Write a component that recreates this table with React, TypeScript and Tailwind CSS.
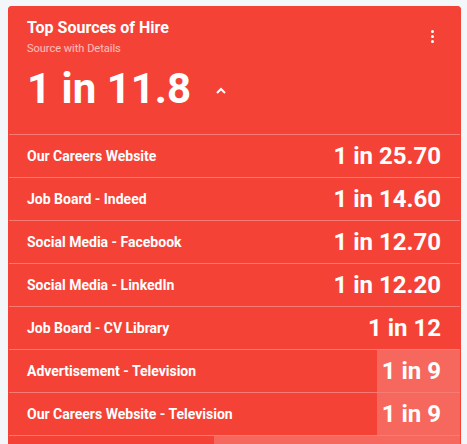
import React from "react";

const rows: { label: string; value: string; light?: boolean }[] = [
  { label: "Our Careers Website", value: "1 in 25.70" },
  { label: "Job Board - Indeed", value: "1 in 14.60" },
  { label: "Social Media - Facebook", value: "1 in 12.70" },
  { label: "Social Media - LinkedIn", value: "1 in 12.20" },
  { label: "Job Board - CV Library", value: "1 in 12" },
  { label: "Advertisement - Television", value: "1 in 9", light: true },
  { label: "Our Careers Website - Television", value: "1 in 9", light: true },
];

export default function App() {
  return (
    <div
      className="w-[467px] h-[444px] overflow-hidden bg-[#f4f7fa] pl-2 pt-[6px]"
      style={{ fontFamily: "Roboto, 'Liberation Sans', sans-serif" }}
    >
      <div className="w-[453px] bg-[#f44336] rounded-t-[3px] border border-[#f44336] text-white">
        <div className="relative h-[127px] pl-[18px] pt-[10px]">
          <div className="text-[16px] font-bold leading-[21px]">Top Sources of Hire</div>
          <div className="text-[11px] leading-[14px] mt-[4px] text-white/65">Source with Details</div>
          <div className="flex items-center mt-[9px]">
            <span className="text-[42px] font-bold leading-[48px]">1 in 11.8</span>
            <svg width="12" height="8" viewBox="0 0 12 8" className="ml-[24px] mt-[3px]">
              <path d="M2 6 L6 2 L10 6" fill="none" stroke="white" strokeWidth="2" />
            </svg>
          </div>
          <div className="absolute right-[26px] top-[23px] flex flex-col gap-[2px]">
            <span className="block w-[3px] h-[3px] rounded-full bg-white" />
            <span className="block w-[3px] h-[3px] rounded-full bg-white" />
            <span className="block w-[3px] h-[3px] rounded-full bg-white" />
          </div>
        </div>
        {rows.map((r) => (
          <div key={r.label} className="flex h-[43px] border-t border-white/30">
            <div className="flex-1 flex items-center pl-[18px] text-[14px] font-bold">{r.label}</div>
            <div
              className={
                "flex items-center pr-[19px] pl-[5px] text-[24px] font-bold " +
                (r.light ? "bg-white/20" : "")
              }
            >
              {r.value}
            </div>
          </div>
        ))}
        <div className="flex h-[43px] border-t border-white/30">
          <div className="w-[205px]" />
          <div className="flex-1 bg-white/20" />
        </div>
      </div>
    </div>
  );
}
